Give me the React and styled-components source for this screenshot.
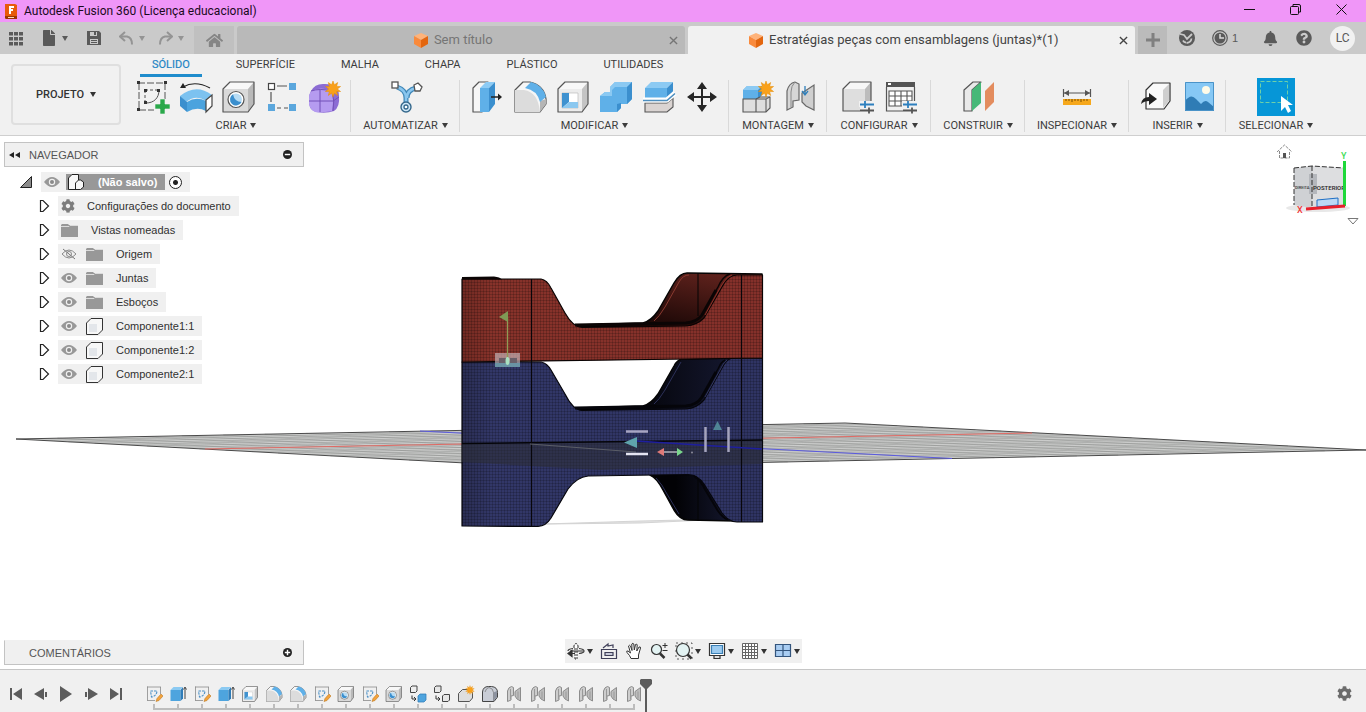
import React from 'react';
import styled, { createGlobalStyle } from 'styled-components';
import { FaBell, FaCog, FaFile, FaHome, FaQuestionCircle } from 'react-icons/fa';

const GlobalStyle = createGlobalStyle`
  *, *::before, *::after { box-sizing: border-box; }
  body {
    margin: 0;
    background: #ffffff;
    color: #333333;
    font-family: "Liberation Sans", Arial, sans-serif;
    font-size: 11px;
  }
  button {
    border: 0;
    padding: 0;
    background: none;
    color: inherit;
    font: inherit;
    cursor: pointer;
  }
  ul, ol { list-style: none; margin: 0; padding: 0; }
  svg { display: block; flex: none; }
`;

/* ---------- shell ---------- */

const Shell = styled.div`
  display: flex;
  flex-direction: column;
  min-height: 100vh;
`;

const TitleBar = styled.header`
  display: flex;
  align-items: center;
  height: 22px;
  padding: 0 2px 0 4px;
  gap: 6px;
  background: #f096f8;
  color: #1a0a1c;
`;

const Title = styled.h1`
  flex: 1;
  margin: 0;
  font-family: Roboto, "Open Sans", sans-serif;
  font-size: 12px;
  font-weight: 400;
  line-height: 20px;
  white-space: nowrap;
`;

const WindowControls = styled.div`
  display: flex;
  align-self: flex-start;
`;

const WindowButton = styled.button`
  display: flex;
  align-items: center;
  justify-content: center;
  width: 46px;
  height: 19px;
`;

const DocumentBar = styled.div`
  display: flex;
  align-items: flex-end;
  height: 32px;
  background: #cacaca;
  color: #5a5a5a;
`;

const QuickAccess = styled.div`
  display: flex;
  align-items: center;
  flex: none;
  width: 194px;
  height: 32px;
  padding-left: 8px;
`;

const QuickButton = styled.button`
  display: flex;
  align-items: center;
  gap: 5px;
  margin-right: ${(p) => p.$after}px;
  color: ${(p) => (p.disabled ? '#949494' : '#5a5a5a')};
`;

const HomeTab = styled.button`
  display: flex;
  align-items: center;
  justify-content: center;
  flex: none;
  width: 40px;
  height: 28px;
  margin-right: 3px;
  background: #c0c0c0;
  color: #858585;
`;

const DocumentTab = styled.div`
  display: flex;
  align-items: center;
  flex: 1;
  height: 28px;
  padding-right: 7px;
  margin-right: 3px;
  border-radius: 3px 3px 0 0;
  background: ${(p) => (p.$active ? '#f1f1f1' : '#b9b9b9')};
  color: ${(p) => (p.$active ? '#444444' : '#757575')};
`;

const DocumentName = styled.button`
  display: flex;
  align-items: center;
  justify-content: center;
  flex: 1;
  gap: 5px;
  font-family: Roboto, "Liberation Sans", sans-serif;
  font-size: 13px;
  line-height: 16px;
  white-space: nowrap;
`;

const SessionTools = styled.div`
  display: flex;
  align-items: center;
  flex: none;
  width: 228px;
  height: 32px;
`;

const NewTabButton = styled.button`
  display: flex;
  align-items: center;
  justify-content: center;
  align-self: flex-end;
  width: 29px;
  height: 28px;
  margin-right: 12px;
  background: #bbbbbb;
  color: #808080;
`;

const SessionButton = styled.button`
  display: flex;
  align-items: center;
  gap: 4px;
  margin-right: ${(p) => p.$after}px;
  font-size: 11px;
`;

const Avatar = styled.button`
  width: 25px;
  height: 25px;
  border-radius: 50%;
  background: #f1f1f1;
  font-family: Roboto, sans-serif;
  font-size: 12px;
`;

/* ---------- ribbon ---------- */

const Ribbon = styled.section`
  display: flex;
  height: 82px;
  border-bottom: 1px solid #cfcfcf;
  background: #f1f1f1;
`;

const WorkspaceButton = styled.button`
  display: flex;
  align-items: center;
  justify-content: center;
  flex: none;
  gap: 6px;
  width: 110px;
  height: 61px;
  margin: 10px 0 0 11px;
  border: 2px solid #dfdfdf;
  border-radius: 4px;
  font-family: Roboto, sans-serif;
  font-weight: 500;
`;

const RibbonBody = styled.div`
  flex: 1;
`;

const RibbonTabs = styled.nav`
  display: flex;
  gap: 22px;
  height: 23px;
  padding-left: 19px;
`;

const RibbonTab = styled.button`
  height: 23px;
  padding: 1px 12px 0;
  border-bottom: 3px solid ${(p) => (p.$active ? '#1f8ccc' : 'transparent')};
  color: ${(p) => (p.$active ? '#1f84c4' : '#3c3c3c')};
  font-family: Roboto, sans-serif;
  font-size: 11px;
  -webkit-text-stroke: ${(p) => (p.$active ? '0.2px' : '0')};
`;

const Groups = styled.div`
  display: flex;
`;

const Group = styled.div`
  display: flex;
  flex-direction: column;
  align-items: center;
  flex: none;
  width: ${(p) => p.$width}px;
  margin-top: 1px;
  background: ${(p) =>
    p.$last ? 'none' : 'linear-gradient(#d9d9d9, #d9d9d9) right 2px / 1px 52px no-repeat'};
`;

const Tools = styled.div`
  display: flex;
  gap: 7px;
  height: 38px;
  align-items: center;
  padding-left: ${(p) => p.$lead || 0}px;
`;

const GroupMenu = styled.button`
  display: flex;
  align-items: center;
  gap: 4px;
  height: 18px;
  font-family: Roboto, sans-serif;
  font-size: 11px;
  color: #3c3c3c;
`;

const CaretShape = styled.span`
  width: 0;
  height: 0;
  border: 3px solid transparent;
  border-top: 5px solid currentColor;
  border-bottom: 0;
`;

/* ---------- viewport ---------- */

const Viewport = styled.main`
  display: flex;
  flex-direction: column;
  justify-content: space-between;
  flex: 1;
  position: relative;
  min-height: 400px;
  overflow: hidden;
`;

const Scene = styled.svg`
  position: absolute;
  inset: 0;
  width: 100%;
  height: 100%;
`;

const UpperRow = styled.div`
  display: flex;
  justify-content: space-between;
  position: relative;
`;

const LowerRow = styled.div`
  display: grid;
  grid-template-columns: 1fr auto 1fr;
  position: relative;
  padding-bottom: 4px;
`;

const Browser = styled.section`
  margin: 6px 0 0 4px;
`;

const PanelBar = styled.div`
  display: flex;
  align-items: center;
  width: 300px;
  height: 25px;
  padding: 0 11px 0 4px;
  border: 1px solid #c3c3c3;
  border-top-color: ${(p) => (p.$flat ? '#f0f0f0' : '#c3c3c3')};
  margin: ${(p) => (p.$flat ? '1px 0 0 4px' : '0')};
  background: #f0f0f0;
  color: #555555;
`;

const PanelToggle = styled.button`
  display: flex;
  width: 20px;
  color: #222222;
`;

const PanelTitle = styled.h2`
  flex: 1;
  margin: 0;
  font-size: 11px;
  font-weight: 400;
`;

const Tree = styled.ul`
  padding-top: 3px;
`;

const TreeRow = styled.li`
  display: flex;
  align-items: center;
  height: 24px;
  padding-left: ${(p) => (p.$root ? 16 : 34)}px;
`;

const Expander = styled.button`
  display: flex;
  width: ${(p) => (p.$root ? 21 : 20)}px;
`;

const Chip = styled.div`
  display: flex;
  align-items: center;
  height: 20px;
  padding-right: 8px;
  background: #f0f0f0;
  color: #303030;
  white-space: nowrap;
`;

const Slot = styled.button`
  display: flex;
  width: ${(p) => (p.$narrow ? 21 : 25)}px;
  padding-left: 3px;
`;

const NodeName = styled.span`
  padding-left: 8px;
`;

const RootName = styled.span`
  display: flex;
  align-items: center;
  gap: 14px;
  height: 16px;
  padding: 0 8px 0 2px;
  margin-right: 4px;
  background: #989898;
  color: #ffffff;
  font-weight: 700;
`;

const ActiveRadio = styled.input`
  appearance: none;
  width: 13px;
  height: 13px;
  margin: 0;
  border: 1px solid #222222;
  border-radius: 50%;
  background: radial-gradient(circle, #222222 2px, #ffffff 3px);
`;

const CubeArea = styled.div`
  flex: none;
  width: 96px;
`;

const NavBar = styled.div`
  display: flex;
  align-items: center;
  gap: 7px;
  height: 24px;
  padding: 0 2px;
  background: #f0f0f0;
`;

const NavButton = styled.button`
  display: flex;
  align-items: center;
  gap: 2px;
  color: #333333;
`;

/* ---------- timeline ---------- */

const Timeline = styled.footer`
  display: flex;
  height: 43px;
  border-top: 1px solid #c6c6c6;
  background: #f0f0f0;
  color: #5c5c5c;
`;

const Playback = styled.div`
  display: flex;
  align-items: center;
  flex: none;
  gap: 7px;
  width: 142px;
  height: 47px;
  padding-left: 7px;
`;

const History = styled.div`
  flex: none;
`;

const Features = styled.ol`
  display: flex;
  height: 34px;
  padding-top: 14px;
`;

const Feature = styled.li`
  display: flex;
  justify-content: center;
  width: 24px;
`;

const Rail = styled.div`
  display: flex;
  justify-content: space-between;
  height: 6px;
  margin: 0 11px;
  border-bottom: 2px solid #bdbdbd;
`;

const Tick = styled.span`
  width: 2px;
  background: #bdbdbd;
`;

const Playhead = styled.div`
  flex: 1;
  padding-top: 9px;
  margin-left: -6px;
`;

const SettingsButton = styled.button`
  display: flex;
  align-items: center;
  height: 47px;
  padding-right: 14px;
  color: #6c6c6c;
`;

/* ---------- small drawings ---------- */

const BLUE = '#5fb0e8';
const DEEP = '#3b8fce';
const LINE = '#555555';

const Caret = () => <CaretShape aria-hidden="true" />;

const Svg = ({ size = 36, children }) => (
  <svg width={size} height={size} viewBox="0 0 36 36" fill="none" aria-hidden="true">
    {children}
  </svg>
);

const Burst = ({ x, y, r = 7 }) => {
  const pts = Array.from({ length: 20 }, (_, i) => {
    const a = (Math.PI * i) / 10;
    const d = i % 2 ? r * 0.55 : r;
    return `${(x + d * Math.sin(a)).toFixed(1)},${(y - d * Math.cos(a)).toFixed(1)}`;
  }).join(' ');
  return <polygon points={pts} fill="#f9a11b" stroke="#e58a00" strokeWidth=".5" />;
};

const Sliders = () => (
  <g>
    <path d="M19 25h16M20 31h14" stroke="#f1f1f1" strokeWidth="6" />
    <path d="M20 25.500h14M25 22v7" stroke="#2d7fbe" strokeWidth="1.800" />
    <path d="M20 31.500h14M29 28.500v6" stroke="#555" strokeWidth="1.800" />
  </g>
);

const GrayCube = () => (
  <g strokeLinejoin="round">
    <path d="M3 10l7-7h21l-6 7z" fill="#f7f7f7" />
    <path d="M25 10l6-7v22l-6 7z" fill="#bcbcbc" />
    <path d="M3 10h22v22H3z" fill="#dedede" />
    <path d="M3 10l7-7h21v22l-6 7H3z" stroke={LINE} strokeWidth="1.200" />
  </g>
);

const RibbonIcons = {
  sketch: (
    <Svg>
      <path d="M3 4h27M4 4v27M30 4v16M4 31h15" stroke="#555" strokeWidth="1" strokeDasharray="7 2" />
      <path d="M10 11h12M10 11v13" stroke="#555" strokeWidth="1" strokeDasharray="3 2" />
      <path d="M24 11c0 8-5 13-13 13" stroke="#555" strokeWidth="1" />
      <path d="M2 2h3v3H2zM29 2h3v3h-3zM2 29h3v3H2zM9 10h3v3H9zM22 10h3v3h-3zM9 22h3v3H9z" fill="#333" />
      <path d="M25 20h5v5h5v5h-5v5h-5v-5h-5v-5h5z" fill="#2aa84a" stroke="#f1f1f1" strokeWidth=".6" />
    </Svg>
  ),
  revolve: (
    <Svg>
      <path d="M5 8Q17 1 32 9" stroke="#222" strokeWidth="1.200" />
      <path d="M2 9l3-5 3 5z" fill="#222" />
      <path d="M2 17Q18 4 34 16l-6 6Q18 15 8 23z" fill="#7cc2f0" />
      <path d="M2 17l7 6v10l-7-6z" fill={DEEP} />
      <path d="M9 23Q18 17 28 22v10q-9-5-19 1z" fill="#4ba3de" />
      <path d="M28 21l6-5v11l-6 6z" fill="#fff" stroke="#444" strokeWidth="1.200" />
    </Svg>
  ),
  hole: (
    <Svg>
      <path d="M2 10l7-7h24l-6 7z" fill="#f8f8f8" />
      <path d="M27 10l6-7v22l-6 8z" fill="#b9b9b9" />
      <path d="M2 10h25v23H2z" fill="#d9d9d9" />
      <path d="M2 10l7-7h24v22l-6 8H2z" stroke={LINE} strokeWidth="1.200" strokeLinejoin="round" />
      <circle cx="15" cy="20.500" r="8" fill="#fff" stroke={LINE} strokeWidth="1.200" />
      <circle cx="15" cy="20.500" r="6" fill="#b7dcf4" />
      <path d="M12 15.300a6 6 0 1 0 8.500 7.700q-7 0-8.500-7.700z" fill={DEEP} />
    </Svg>
  ),
  pattern: (
    <Svg>
      <path d="M13 7h10M7 13v10M13 29h4M20 29h4" stroke="#555" strokeWidth="1.200" />
      <rect x="4.500" y="4.500" width="6" height="6" fill="#fff" stroke="#444" strokeWidth="1.200" />
      <path d="M25 4h7v7h-7zM4 25h7v7H4zM25 25h7v7h-7z" fill="#5ba7dd" />
    </Svg>
  ),
  form: (
    <Svg>
      <path d="M4 12Q8 4 18 5q14 0 14 12 1 11-5 15-8 3-18 1Q1 31 2 20q0-5 2-8z" fill="#8c6cd4" />
      <path d="M4 12Q14 7 25 12q2 10 0 20-11 2-17 1Q1 30 2 20q0-5 2-8z" fill="#b59bf0" />
      <path d="M2 22h24M13 11v22M4 12q9-3 21 0 3 10 1 20M26 22l6-4" stroke="#7350b8" strokeWidth="1" />
      <Burst x={26} y={10} r={8} />
    </Svg>
  ),
  automate: (
    <Svg>
      <path d="M9 8q9 3 9 11M28 9q-9 2-9 10M18 16v12" stroke="#4188b8" strokeWidth="5" />
      <path d="M9 8q9 3 9 11M28 9q-9 2-9 10M18 16v12" stroke="#8ac6ee" strokeWidth="2.500" />
      <rect x="4" y="3" width="6" height="6" fill="#fff" stroke="#555" strokeWidth="1.300" />
      <path d="M26 6l4-2 4 4-2 4h-5z" fill="#fff" stroke="#555" strokeWidth="1.300" />
      <circle cx="18" cy="28" r="5" fill="#cfe8f8" stroke="#34688c" strokeWidth="1.400" />
      <circle cx="18" cy="28" r="2" fill="#fff" stroke="#34688c" strokeWidth="1.300" />
    </Svg>
  ),
  pressPull: (
    <Svg>
      <path d="M4 9l6-6h9l-6 6v24H4z" fill="#f6f6f6" stroke={LINE} strokeWidth="1.200" strokeLinejoin="round" />
      <path d="M11 9l6-6h9l-6 6z" fill="#8ccbf5" />
      <path d="M11 9h9v24h-9z" fill={BLUE} />
      <path d="M20 9l6-6v22l-6 8z" fill={DEEP} />
      <path d="M22 18h8" stroke="#222" strokeWidth="1.500" />
      <path d="M29 14.500l4 3.500-4 3.500z" fill="#222" />
    </Svg>
  ),
  fillet: (
    <Svg>
      <path d="M3 11l8-8h7q14 3 16 17v5l-6 8H3z" fill="#f6f6f6" stroke={LINE} strokeWidth="1.200" strokeLinejoin="round" />
      <path d="M3 11h9q14 2 16 22H3z" fill="#dcdcdc" />
      <path d="M28 22l6-2v5l-6 8z" fill="#b5b5b5" />
      <path d="M13 9l6-6q12 3 15 15l-6 5Q25 11 13 9z" fill={BLUE} />
    </Svg>
  ),
  shell: (
    <Svg>
      <path d="M3 10l7-7h23l-6 7z" fill="#f8f8f8" />
      <path d="M27 10l6-7v22l-6 8z" fill="#c4c4c4" />
      <path d="M3 10h24v23H3z" fill="#ececec" />
      <path d="M3 10l7-7h23v22l-6 8H3z" stroke={LINE} strokeWidth="1.200" strokeLinejoin="round" />
      <path d="M7 14h16v15H7z" fill="#fff" stroke="#bbb" strokeWidth=".7" />
      <path d="M7 14h7v9l-7 6z" fill="#3f92d0" />
      <path d="M14 23h9v6H7z" fill="#8bc8f0" />
    </Svg>
  ),
  combine: (
    <Svg>
      <path d="M2 17l5-4h5V8l5-5h17v17l-5 5h-6v4l-4 4H2z" fill={BLUE} />
      <path d="M2 17l5-4h5V8l5-5h17l-5 5H17l-3 3v6z" fill="#8bc9f2" />
      <path d="M29 8l5-5v17l-5 5zM19 25l4-1v5l-4 4z" fill={DEEP} />
    </Svg>
  ),
  split: (
    <Svg>
      <path d="M4 9l6-6h22l-6 6z" fill="#8ccaf3" />
      <path d="M4 9h22v10H4z" fill={BLUE} />
      <path d="M26 9l6-6v10l-6 6z" fill={DEEP} />
      <path d="M4 24h22l6-5v9l-6 5H4z" fill="#dad4d2" stroke={LINE} strokeWidth="1.100" />
      <path d="M2 21h24l8-7" stroke="#fff" strokeWidth="5" />
      <path d="M2 21.500h24l8-7" stroke="#4d8fc0" strokeWidth="1.600" />
    </Svg>
  ),
  move: (
    <Svg>
      <path d="M18 6v24M6 18h24" stroke="#262626" strokeWidth="2" />
      <path d="M18 3l5 7H13zM18 33l5-7H13zM3 18l7-5v10zM33 18l-7-5v10z" fill="#262626" />
    </Svg>
  ),
  assemble: (
    <Svg>
      <path d="M4 11l4-4h15l-4 4v9H4z" fill={BLUE} />
      <path d="M4 11l4-4h15l-4 4z" fill="#8ccaf3" />
      <path d="M19 11l4-4v9l-4 4z" fill={DEEP} />
      <path d="M4 20h13v13H4zM17 20l4-2h10v11l-4 4H17z" fill="#dedede" stroke={LINE} strokeWidth="1.100" />
      <path d="M17 20h10v13M27 20l4-2" stroke={LINE} strokeWidth="1" />
      <Burst x={27} y={10} r={8} />
    </Svg>
  ),
  joint: (
    <Svg>
      <path d="M5 12q2-8 8-9l4 2v16l-6 1v6l-6 3z" fill="#d6d6d6" stroke="#686868" strokeWidth="1.200" />
      <path d="M13 3q-4 4-4 10v15" stroke="#8a8a8a" strokeWidth="1" />
      <path d="M20 14l12-8v25l-8-4-4-4z" fill="#cfcfcf" stroke="#686868" strokeWidth="1.200" />
      <path d="M23 7v8M20 12l3 4 3-4" stroke="#2f7fba" strokeWidth="1.300" />
    </Svg>
  ),
  configure: (
    <Svg>
      <GrayCube />
      <Sliders />
    </Svg>
  ),
  table: (
    <Svg>
      <path d="M3 3h29v5H3z" fill="#555" />
      <path d="M5 4h3v2H5z" fill="#fff" />
      <path d="M3.500 8v24H22M31.500 8v16" stroke="#555" strokeWidth="1.200" />
      <path d="M6 12h23v15H6zM6 17h23M6 22h23M12 12v15M18 12v15M24 12v15" fill="#fff" stroke="#555" strokeWidth="1.100" />
      <Sliders />
    </Svg>
  ),
  planes: (
    <Svg>
      <path d="M4 11l9-8h8l-9 8v21H4z" fill="#e9e9e9" stroke={LINE} strokeWidth="1.200" strokeLinejoin="round" />
      <path d="M12 11l9-8v21l-9 8z" fill="#46b878" />
      <path d="M25 12l9-9v20l-9 9z" fill="#e38c5e" />
    </Svg>
  ),
  measure: (
    <Svg>
      <path d="M4.500 10v8M31.500 10v8M5 14h26" stroke="#555" strokeWidth="1.200" />
      <path d="M5 14l5-3v6zM31 14l-5-3v6z" fill="#555" />
      <path d="M4 20h28v6H4z" fill="#f6a81c" />
      <path d="M7 20v2M10 20v2M13 20v3M16 20v2M19 20v2M22 20v3M25 20v2M28 20v2" stroke="#7a4d00" strokeWidth="1" />
    </Svg>
  ),
  insert: (
    <Svg>
      <path d="M8 11l7-7h17v18l-6 8H8z" fill="#fafafa" stroke="#333" strokeWidth="1.200" strokeLinejoin="round" />
      <path d="M25 11l6-6v17l-6 7z" fill="#cfcfcf" />
      <path d="M3 25q1-7 8-7v-4l8 6-8 6v-4q-5 0-8 3z" fill="#222" />
    </Svg>
  ),
  canvas: (
    <Svg>
      <path d="M4 3h29v29H4z" fill="#86c8f5" />
      <path d="M4 22q6-8 11-2l5 5q4-5 7-2l6 5v4H4z" fill="#2f7cb5" />
      <path d="M4.500 3.500h28v28h-28z" stroke="#4a93c8" />
      <circle cx="25" cy="11" r="4" fill="#fffbe8" />
    </Svg>
  ),
  select: (
    <svg width="38" height="38" viewBox="0 0 38 38" fill="none" aria-hidden="true">
      <path d="M0 0h38v38H0z" fill="#0696d7" />
      <path d="M3.500 3.500h27v21h-27z" stroke="#6fd0a8" strokeDasharray="4 2" />
      <path d="M24 18v15l4-4 3 6 3-2-3-6h5z" fill="#fff" />
    </svg>
  ),
};

const TimelineIcons = {
  sketch: (
    <Svg size={18}>
      <path d="M4 4h28M4 31h16M5 3v28M31 4v14" stroke="#8a8a8a" strokeWidth="1.600" />
      <path d="M11 12h13q-1 10-11 12l-2-12" stroke="#4a8fc6" strokeWidth="2.200" strokeDasharray="5 2" />
      <path d="M22 33l2-6 8-9 4 4-8 9z" fill="#f3a33c" stroke="#b36a10" />
    </Svg>
  ),
  extrude: (
    <Svg size={18}>
      <path d="M3 10l6-6h18l-5 6z" fill="#8bcaf2" />
      <path d="M3 10h20v22H3z" fill="#4ea4de" />
      <path d="M23 10l5-6v23l-5 5z" fill="#2f7cb8" />
      <path d="M32 6v22M29 9l3-5 3 5" stroke="#444" strokeWidth="2" />
    </Svg>
  ),
  shell: <Svg size={18}>{RibbonIcons.shell.props.children}</Svg>,
  fillet: <Svg size={18}>{RibbonIcons.fillet.props.children}</Svg>,
  hole: <Svg size={18}>{RibbonIcons.hole.props.children}</Svg>,
  bodyBlue: (
    <Svg size={18}>
      <path d="M3 5l3-3h10v10l-3 3H3z" fill="#eee" stroke="#444" strokeWidth="2" />
      <path d="M18 22l4-4h12v12l-4 4H18z" fill="#4ea4de" stroke="#2f7cb8" strokeWidth="1.500" />
      <path d="M6 21v7h7M10 24l4 4-4 4" stroke="#333" strokeWidth="2" />
    </Svg>
  ),
  body: (
    <Svg size={18}>
      <path d="M3 5l3-3h10v10l-3 3H3zM19 22l3-3h11v11l-3 3H19z" fill="#e6e6e6" stroke="#444" strokeWidth="2" />
      <path d="M6 21v7h7M10 24l4 4-4 4" stroke="#333" strokeWidth="2" />
    </Svg>
  ),
  component: (
    <Svg size={18}>
      <path d="M3 17l8-8h14l6 6v11l-6 7H3z" fill="#dedede" stroke="#555" strokeWidth="2" />
      <Burst x={26} y={10} r={9} />
    </Svg>
  ),
  capture: (
    <Svg size={18}>
      <path d="M3 14q1-11 12-11h6q12 1 12 12v9l-7 9H3z" fill="#c9cdd6" stroke="#444" strokeWidth="2" />
      <path d="M8 14q2-8 8-9 8 1 9 10v18" stroke="#777" strokeWidth="1.500" />
      <path d="M25 15l7-3v12l-7 8z" fill="#8d93a0" />
    </Svg>
  ),
  joint: (
    <Svg size={18}>
      <path d="M5 12q2-8 8-9l4 2v16l-5 1v8l-7 3z" fill="#cdcdcd" stroke="#8c8c8c" strokeWidth="2" />
      <path d="M20 13l11-8v27l-7-4-4-6z" fill="#bdbdbd" stroke="#8c8c8c" strokeWidth="2" />
      <path d="M11 8v20M26 13v14" stroke="#999" strokeWidth="2" />
    </Svg>
  ),
};

const AppLogo = () => (
  <svg width="14" height="17" viewBox="0 0 14 17" aria-hidden="true">
    <path d="M1 1h10l2 1v14H2l-1-1z" fill="#e8590c" />
    <path d="M1 13h12v3H2l-1-1z" fill="#9c3500" />
    <path d="M5 3h5v2H7v1h2v2H7v3H5z" fill="#fff" />
    <path d="M4 14h6v1H4z" fill="#ffd6b8" />
  </svg>
);

const DocCube = () => (
  <svg width="16" height="16" viewBox="0 0 16 16" aria-hidden="true">
    <path d="M8 1l7 3-7 4-7-4z" fill="#ffb37a" />
    <path d="M1 4l7 4v8l-7-4z" fill="#f98a3c" />
    <path d="M15 4L8 8v8l7-4z" fill="#e3660f" />
  </svg>
);

const CloseMark = ({ size = 9 }) => (
  <svg width={size} height={size} viewBox="0 0 10 10" aria-hidden="true">
    <path d="M1 1l8 8M9 1L1 9" stroke="currentColor" strokeWidth="1.500" />
  </svg>
);

const ArrowBack = ({ flip }) => (
  <svg width="15" height="14" viewBox="0 0 15 14" fill="none" aria-hidden="true">
    <g transform={flip ? 'translate(15 0) scale(-1 1)' : undefined}>
      <path d="M6 1L1 5.500 6 10" stroke="currentColor" strokeWidth="2" />
      <path d="M2 5.500h6q5 1 5 8" stroke="currentColor" strokeWidth="2" />
    </g>
  </svg>
);

const Eye = ({ hidden }) =>
  hidden ? (
    <svg width="16" height="12" viewBox="0 0 16 12" fill="none" aria-hidden="true">
      <path d="M1 6q7-8 14 0-7 8-14 0z" stroke="#8a8a8a" />
      <circle cx="8" cy="6" r="2.500" stroke="#8a8a8a" />
      <path d="M2 1l12 10" stroke="#777" />
    </svg>
  ) : (
    <svg width="16" height="12" viewBox="0 0 16 12" aria-hidden="true">
      <path d="M0 6q8-10 16 0-8 10-16 0z" fill="#989898" />
      <circle cx="8" cy="6" r="3.200" fill="#f0f0f0" />
      <circle cx="8" cy="6" r="2" fill="#8a8a8a" />
    </svg>
  );

const Folder = () => (
  <svg width="17" height="13" viewBox="0 0 17 13" aria-hidden="true">
    <path d="M0 1l1-1h6l1 1h9v12H0z" fill="#989898" />
    <path d="M0 2.500h8l1-1h8" stroke="#dcdcdc" fill="none" />
  </svg>
);

const BodyBox = () => (
  <svg width="17" height="17" viewBox="0 0 17 17" aria-hidden="true">
    <path d="M.5 5L5 .5h11.500V12L12 16.500H.5z" fill="#f7f7f7" stroke="#333" />
    <path d="M3 6h8v8H3z" fill="#e3e6ea" />
  </svg>
);

const RootBox = () => (
  <svg width="16" height="16" viewBox="0 0 16 16" aria-hidden="true">
    <path d="M.5 4L4 .5h6.500V6h2l3 2v5l-3 2.500H.5z" fill="#f7f7f7" stroke="#222" />
    <path d="M7.500 15.500V9L10.500 6" fill="none" stroke="#222" />
  </svg>
);

const Ball = ({ plus }) => (
  <svg width="9" height="9" viewBox="0 0 10 10" aria-hidden="true">
    <circle cx="5" cy="5" r="5" fill="#222" />
    <path d={plus ? 'M2 5h6M5 2v6' : 'M2 5h6'} stroke="#fff" strokeWidth="1.600" />
  </svg>
);

const SmallTool = ({ children }) => (
  <svg width="18" height="18" viewBox="0 0 18 18" fill="none" stroke="#333" strokeWidth="1.200" aria-hidden="true">
    {children}
  </svg>
);

const NAV_TOOLS = [
  {
    name: 'Órbita',
    menu: true,
    icon: (
      <SmallTool>
        <path d="M8 17V5H6l3-4 3 4h-2v12z" fill="#fff" strokeWidth="1" strokeDasharray="2 1" />
        <path d="M12 6.500q5 .5 5 2.500t-5 2.500" />
        <path d="M6 6.500Q1 7 1 9" />
        <path d="M1 11.500l4-3v6z" fill="#333" />
        <path d="M4 11.500h4M3 9h13" />
      </SmallTool>
    ),
  },
  {
    name: 'Olhar para',
    icon: (
      <SmallTool>
        <path d="M1.500 7.500h15v9h-15z" stroke="#3f3f58" />
        <path d="M5 10.500h8v3H5z" fill="#c6c9d8" stroke="#3f3f58" />
        <path d="M3 6l5-4v2l5-1v3" stroke="#3f3f58" />
      </SmallTool>
    ),
  },
  {
    name: 'Mover vista',
    icon: (
      <SmallTool>
        <path
          d="M6 16.500q-1-3-4-6-1-2 1-1.500L5.500 11 3.500 4q1-1.500 2 0L7 8.500 6.800 2q1.200-1.500 2 0L9.300 8l1.200-5.500q1.500-1 1.700.5L11.800 9l2.200-4q1.700-.5 1.500 1L13.500 13v3.500z"
          fill="#fff"
          strokeWidth="1"
        />
      </SmallTool>
    ),
  },
  {
    name: 'Zoom',
    icon: (
      <SmallTool>
        <circle cx="6.500" cy="7.500" r="5" fill="#e3f3f3" />
        <path d="M10 11.500l4.500 4.500" strokeWidth="2.500" />
        <path d="M12.500 3.500h5M15 1v5M12.500 8.500h5" strokeWidth="1" />
      </SmallTool>
    ),
  },
  {
    name: 'Ajustar',
    menu: true,
    icon: (
      <SmallTool>
        <path d="M1 1h16v16H1z" strokeDasharray="2 3" strokeWidth=".8" />
        <circle cx="8" cy="8" r="6.500" fill="#e3f3f3" />
        <path d="M12.500 12.500l4 4" strokeWidth="2.500" />
      </SmallTool>
    ),
  },
  {
    name: 'Configurações de exibição',
    menu: true,
    icon: (
      <SmallTool>
        <path d="M6 13.500h6v3H6z" fill="#ddd" />
        <path d="M1.500 1.500h15v12h-15z" fill="#fff" />
        <path d="M3.500 3.500h11v8h-11z" fill="#9ccbf0" stroke="#3a7fb4" />
      </SmallTool>
    ),
  },
  {
    name: 'Grade e encaixe',
    menu: true,
    icon: (
      <SmallTool>
        <path
          d="M1.500 1.500h15v15h-15zM4.500 1.500v15M7.500 1.500v15M10.500 1.500v15M13.500 1.500v15M1.500 4.500h15M1.500 7.500h15M1.500 10.500h15M1.500 13.500h15"
          stroke="#666"
          strokeWidth="1"
          fill="#fff"
        />
      </SmallTool>
    ),
  },
  {
    name: 'Viewports',
    menu: true,
    icon: (
      <SmallTool>
        <path d="M1.500 2.500h15v12h-15z" fill="#a9cdf2" stroke="#33557d" />
        <path d="M9 3v11M2 8.500h14" stroke="#33557d" />
      </SmallTool>
    ),
  },
];

const RIBBON_TABS = ['SÓLIDO', 'SUPERFÍCIE', 'MALHA', 'CHAPA', 'PLÁSTICO', 'UTILIDADES'];

const GROUPS = [
  { label: 'CRIAR', width: 230, lead: 6, tools: ['sketch', 'revolve', 'hole', 'pattern', 'form'] },
  { label: 'AUTOMATIZAR', width: 109, tools: ['automate'] },
  { label: 'MODIFICAR', width: 269, tools: ['pressPull', 'fillet', 'shell', 'combine', 'split', 'move'] },
  { label: 'MONTAGEM', width: 98, tools: ['assemble', 'joint'] },
  { label: 'CONFIGURAR', width: 104, tools: ['configure', 'table'] },
  { label: 'CONSTRUIR', width: 94, tools: ['planes'] },
  { label: 'INSPECIONAR', width: 104, tools: ['measure'] },
  { label: 'INSERIR', width: 97, tools: ['insert', 'canvas'] },
  { label: 'SELECIONAR', width: 100, tools: ['select'] },
];

const NODES = [
  { name: 'Configurações do documento', kind: 'settings' },
  { name: 'Vistas nomeadas', kind: 'folder' },
  { name: 'Origem', kind: 'folder', eye: 'off' },
  { name: 'Juntas', kind: 'folder', eye: 'on' },
  { name: 'Esboços', kind: 'folder', eye: 'on' },
  { name: 'Componente1:1', kind: 'body', eye: 'on' },
  { name: 'Componente1:2', kind: 'body', eye: 'on' },
  { name: 'Componente2:1', kind: 'body', eye: 'on' },
];

const FEATURES = [
  'sketch', 'extrude', 'sketch', 'extrude', 'shell', 'fillet', 'fillet',
  'sketch', 'hole', 'sketch', 'hole', 'bodyBlue', 'body', 'component', 'capture',
  'joint', 'joint', 'joint', 'joint', 'joint', 'joint',
];

const PLAYBACK = [
  { name: 'Início', d: 'M3 3h2v12H3zM15 3v12L6 9z' },
  { name: 'Voltar', d: 'M12 3v12L2 9zM13 7h2v5h-2z' },
  { name: 'Reproduzir', d: 'M3 1l12 8L3 17z' },
  { name: 'Avançar', d: 'M6 3l10 6-10 6zM3 7h2v5H3z' },
  { name: 'Fim', d: 'M13 3h2v12h-2zM3 3l9 6-9 6z' },
];

/* ---------- scene ---------- */

const mix = (a, b, t) => [a[0] + (b[0] - a[0]) * t, a[1] + (b[1] - a[1]) * t];
const W = [16, 439];
const N = [845, 423];
const E = [1366, 450];
const S = [540, 467];
const STEPS = Array.from({ length: 19 }, (_, i) => (i + 1) / 20);

const FRONT_RED =
  'M462 279H541Q547 280 551 288L565 313Q573 327 582 327.500L686 326Q697 325 704 318L722 287Q728 275 737 275H762.500V358L462 362z';
const FRONT_BLUE =
  'M462 362H541Q547 363 551 370L565 394Q573 410 582 410.500L686 409Q697 408 704 400L722 368Q726 360 731 358.500L762.500 358V522H737Q729 522 722 513L704 484Q698 475 688 474.500L588 476Q577 477 568 489L551 518Q546 526 538 526.500L462 526z';

const ModelScene = () => (
  <Scene viewBox="0 136 1366 533" preserveAspectRatio="xMidYMid slice" aria-label="Modelo 3D">
    <defs>
      <pattern id="mesh" width="3" height="3" patternUnits="userSpaceOnUse">
        <path d="M0 .5h3M.5 0v3" stroke="#000" strokeOpacity=".17" />
      </pattern>
      <linearGradient id="red" x1="0" x2="1">
        <stop offset="0" stopColor="#6f2922" />
        <stop offset=".1" stopColor="#87322a" />
        <stop offset="1" stopColor="#84302a" />
      </linearGradient>
      <linearGradient id="blue" x1="0" x2="1">
        <stop offset="0" stopColor="#2a2d52" />
        <stop offset=".1" stopColor="#323768" />
        <stop offset="1" stopColor="#2f3463" />
      </linearGradient>
      <linearGradient id="redBack" x1=".3" x2="1" y1="1" y2="0">
        <stop offset="0" stopColor="#140504" />
        <stop offset="1" stopColor="#6a2620" />
      </linearGradient>
      <linearGradient id="blueBack" x1=".3" x2="1">
        <stop offset="0" stopColor="#020205" />
        <stop offset="1" stopColor="#151830" />
      </linearGradient>
    </defs>

    <polygon points={[W, N, E, S].join(' ')} fill="#cfd0cf" />
    <g stroke="#8d8f8d" strokeWidth=".5">
      {STEPS.map((t) => {
        const a = mix(W, S, t);
        const b = mix(N, E, t);
        const c = mix(W, N, t);
        const d = mix(S, E, t);
        return (
          <g key={t}>
            <line x1={a[0]} y1={a[1]} x2={b[0]} y2={b[1]} />
            <line x1={c[0]} y1={c[1]} x2={d[0]} y2={d[1]} />
          </g>
        );
      })}
    </g>
    <polygon points={[W, N, E, S].join(' ')} fill="none" stroke="#4a4a4a" />
    <path d="M205 449L1032 433" stroke="#e06a64" />
    <path d="M420 431L952 458.500" stroke="#5a5ae0" />

    <path d="M545 524L640 521L728 519L640 523z" fill="#e2e2e2" stroke="#d4d4d4" />

    <g stroke="#050505" strokeWidth="1.500" strokeLinejoin="round">
      <path d="M578 325L643 323Q651 321 658 311L674 283Q680 273 687 273L762 274V300L700 327H578z" fill="url(#redBack)" />
      <path d="M578 408L643 406Q651 404 658 394L674 366Q677 360 682 359L735 358L700 410H578z" fill="url(#blueBack)" />
      <path d="M650 475Q657 478 663 490L674 510Q680 520 688 520L735 521L704 474z" fill="url(#blueBack)" />
    </g>
    <path d="M698 273V316M698 480V521" stroke="#050505" />
    <path d="M654 321Q659 317 665 307L679 282Q683 275 689 275" fill="none" stroke="#8a3a30" />
    <path d="M654 404Q659 400 665 390L681 362M656 478Q662 484 667 494L679 514" fill="none" stroke="#2c3058" />

    <g strokeLinejoin="round">
      <path d={FRONT_BLUE} fill="url(#blue)" />
      <path d={FRONT_BLUE} fill="url(#mesh)" stroke="#06060c" strokeWidth="1.200" />
      <path d={FRONT_RED} fill="url(#red)" />
      <path d={FRONT_RED} fill="url(#mesh)" stroke="#0a0404" strokeWidth="1.200" />
    </g>
    <path d="M462 277L494 276.500Q500 277 502 279.500H462z" fill="#0b0505" />
    <path d="M575 325L686 323Q697 322 702 315L716 290" fill="none" stroke="#0b0505" strokeWidth="3" />
    <path d="M702 315L718 287Q723 276 730 274" fill="none" stroke="#0b0505" strokeWidth="1.500" />
    <path d="M705 315L720 288Q726 277 732 275" fill="none" stroke="#8c3027" />
    <path d="M575 408L686 406Q697 405 702 397L716 372" fill="none" stroke="#05050a" strokeWidth="3" />
    <path d="M702 397L718 369Q721 362 725 360" fill="none" stroke="#05050a" strokeWidth="1.500" />
    <path d="M705 397L720 370Q723 363 727 360" fill="none" stroke="#30355f" />
    <path d="M694 476Q700 479 706 491L718 511Q723 518 728 520" fill="none" stroke="#05050a" strokeWidth="2" />

    <path d="M462 444L762 441V464L600 470L462 462z" fill="#2b2d35" fillOpacity=".55" />
    <path d="M462 443.500L762 440" stroke="#050508" strokeWidth="1.500" />
    <path d="M531.500 279V526M741.500 275V522" stroke="#08060a" strokeWidth="1.200" />
    <path d="M530 444L636 452" stroke="#5b5e68" />
    <path d="M636 441L762 449" stroke="#1e1e9e" strokeWidth="1.300" />

    <rect x="495" y="353" width="25" height="14" fill="#c9bcc0" fillOpacity=".65" />
    <path d="M495 363h25v4h-25z" fill="#5f95a5" fillOpacity=".8" />
    <path d="M499 358h7v5h-7zM510 358h7v5h-7z" fill="#6a5f68" />
    <path d="M507.500 317V362" stroke="#8f9a55" strokeWidth="1.300" />
    <path d="M508 311V322L499 317z" fill="#7f9a55" />
    <ellipse cx="507.500" cy="361" rx="2" ry="4" fill="#a9e0c0" />
    <path d="M626 431.500H648" stroke="#a8a6c4" strokeWidth="2.500" />
    <path d="M626 454H648" stroke="#e4e4f0" strokeWidth="2.500" />
    <path d="M624 442.500L637 437V448z" fill="#5fa3ac" />
    <path d="M705.500 427V452M728.500 427V452" stroke="#a4a3bd" strokeWidth="2.500" />
    <path d="M717.500 421L722 430H713z" fill="#4f8494" />
    <path d="M664 452H677" stroke="#f0f0f0" />
    <path d="M657 452L664 448V456z" fill="#e07a78" />
    <path d="M683 452L677 448V456z" fill="#7ad68c" />
    <circle cx="692" cy="452.500" r="1" fill="#8c8c9a" />
  </Scene>
);

const CubeLabel = styled.text`
  font-family: Roboto, "Liberation Sans", sans-serif;
  font-size: ${(p) => p.$size}px;
  font-weight: 500;
  fill: ${(p) => p.$tone};
`;

const ViewCube = () => (
  <svg width="96" height="96" viewBox="1270 136 96 96" fill="none" aria-label="ViewCube">
    <path d="M1277 152L1284.500 145L1292 152M1279.500 151V158H1289.500V151" stroke="#8a8a8a" strokeDasharray="3 1" />
    <path d="M1283 153h3v5h-3z" fill="#555" />
    <ellipse cx="1318" cy="208" rx="32" ry="4" fill="#e8e8e8" />
    <path d="M1294 168L1312 166V208L1294 205z" fill="#cfd1d4" />
    <path d="M1312 166L1344 168V205L1312 209z" fill="#dddee0" />
    <path d="M1309 174h8v20h-8z" fill="#b4b7bc" />
    <path d="M1294 168L1312 166L1344 168M1294 168V205M1312 166V208" stroke="#333" strokeDasharray="5 2" />
    <path d="M1317 200L1338 198V205L1317 207z" fill="#bcd9f5" stroke="#1f6fc4" />
    <CubeLabel x="1313" y="190" $size={6} $tone="#222222">POSTERIOR</CubeLabel>
    <CubeLabel x="1295" y="189" $size={4} $tone="#333333">DIREITA</CubeLabel>
    <path d="M1344.500 161V206" stroke="#1fd83a" strokeWidth="3" />
    <path d="M1306 209L1345 206" stroke="#e8202c" strokeWidth="3" />
    <CubeLabel x="1341" y="159" $size={9} $tone="#3fdc55">Y</CubeLabel>
    <CubeLabel x="1297" y="213" $size={9} $tone="#f03a3a">X</CubeLabel>
    <path d="M1348 218.500H1358L1353 224z" stroke="#777" fill="#fff" />
  </svg>
);

/* ---------- page ---------- */

const nodeIcon = {
  settings: <FaCog size={14} color="#7d7d7d" />,
  folder: <Folder />,
  body: <BodyBox />,
};

export default function App() {
  return (
    <>
      <GlobalStyle />
      <Shell>
        <TitleBar>
          <AppLogo />
          <Title>Autodesk Fusion 360 (Licença educacional)</Title>
          <WindowControls>
            <WindowButton aria-label="Minimizar">
              <svg width="11" height="11" viewBox="0 0 11 11"><path d="M0 5.500h11" stroke="#111" /></svg>
            </WindowButton>
            <WindowButton aria-label="Restaurar">
              <svg width="11" height="11" viewBox="0 0 11 11" fill="none" stroke="#111">
                <rect x=".5" y="2.500" width="8" height="8" rx="1" />
                <path d="M3 2V.5h6q1.500 0 1.500 1.500v6H9" />
              </svg>
            </WindowButton>
            <WindowButton aria-label="Fechar">
              <svg width="11" height="11" viewBox="0 0 11 11"><path d="M.5.5l10 10M10.500.5l-10 10" stroke="#111" /></svg>
            </WindowButton>
          </WindowControls>
        </TitleBar>

        <DocumentBar>
          <QuickAccess>
            <QuickButton $after={18} aria-label="Painel de dados">
              <svg width="15" height="15" viewBox="0 0 15 15" fill="currentColor">
                <path d="M1 1h4v3.500H1zM6 1h4v3.500H6zM11 1h4v3.500h-4zM1 6h4v3.500H1zM6 6h4v3.500H6zM11 6h4v3.500h-4zM1 11h4v3.500H1zM6 11h4v3.500H6zM11 11h4v3.500h-4z" />
              </svg>
            </QuickButton>
            <QuickButton $after={18} aria-label="Arquivo">
              <FaFile size={16} />
              <Caret />
            </QuickButton>
            <QuickButton $after={17} aria-label="Salvar">
              <svg width="16" height="16" viewBox="0 0 16 16">
                <path d="M1 1h12l2 2v12H1z" fill="currentColor" />
                <path d="M4 2h7v4H4zM4 9h8v5H4z" fill="#cacaca" />
                <path d="M8 2h2v3H8zM5 10h6v1H5zM5 12h6v1H5z" fill="currentColor" />
              </svg>
            </QuickButton>
            <QuickButton $after={13} disabled aria-label="Desfazer">
              <ArrowBack />
              <Caret />
            </QuickButton>
            <QuickButton $after={0} disabled aria-label="Refazer">
              <ArrowBack flip />
              <Caret />
            </QuickButton>
          </QuickAccess>
          <HomeTab aria-label="Início">
            <FaHome size={17} />
          </HomeTab>
          <DocumentTab>
            <DocumentName>
              <DocCube />
              Sem título
            </DocumentName>
            <button aria-label="Fechar Sem título"><CloseMark /></button>
          </DocumentTab>
          <DocumentTab $active>
            <DocumentName>
              <DocCube />
              Estratégias peças com ensamblagens (juntas)*(1)
            </DocumentName>
            <button aria-label="Fechar documento"><CloseMark /></button>
          </DocumentTab>
          <SessionTools>
            <NewTabButton aria-label="Novo documento">
              <svg width="14" height="14" viewBox="0 0 14 14"><path d="M7 0v14M0 7h14" stroke="currentColor" strokeWidth="3" /></svg>
            </NewTabButton>
            <SessionButton $after={17} aria-label="Extensões">
              <svg width="16" height="16" viewBox="0 0 16 16">
                <circle cx="8" cy="8" r="8" fill="currentColor" />
                <path d="M1 4l4 1 3 4 5-5M12.500 8.500q-.5 4-5 4.500M4 10.500q1 2 3 2" stroke="#cacaca" strokeWidth="1.800" fill="none" />
              </svg>
            </SessionButton>
            <SessionButton $after={25} aria-label="Status do trabalho">
              <svg width="16" height="16" viewBox="0 0 16 16" fill="none">
                <circle cx="8" cy="8" r="7.300" stroke="currentColor" strokeWidth="1.200" />
                <circle cx="8" cy="8" r="5.500" fill="currentColor" />
                <path d="M8 4v4h4" stroke="#dadada" strokeWidth="1.500" />
              </svg>
              1
            </SessionButton>
            <SessionButton $after={18} aria-label="Notificações"><FaBell size={15} /></SessionButton>
            <SessionButton $after={18} aria-label="Ajuda"><FaQuestionCircle size={16} /></SessionButton>
            <Avatar>LC</Avatar>
          </SessionTools>
        </DocumentBar>

        <Ribbon>
          <WorkspaceButton>
            PROJETO
            <Caret />
          </WorkspaceButton>
          <RibbonBody>
            <RibbonTabs>
              {RIBBON_TABS.map((tab, i) => (
                <RibbonTab key={tab} $active={i === 0}>{tab}</RibbonTab>
              ))}
            </RibbonTabs>
            <Groups>
              {GROUPS.map((g, i) => (
                <Group key={g.label} $width={g.width} $last={i === GROUPS.length - 1}>
                  <Tools $lead={g.lead}>
                    {g.tools.map((t) => (
                      <button key={t} aria-label={t}>{RibbonIcons[t]}</button>
                    ))}
                  </Tools>
                  <GroupMenu>
                    {g.label}
                    <Caret />
                  </GroupMenu>
                </Group>
              ))}
            </Groups>
          </RibbonBody>
        </Ribbon>

        <Viewport>
          <ModelScene />
          <UpperRow>
            <Browser>
              <PanelBar>
                <PanelToggle aria-label="Recolher navegador">
                  <svg width="11" height="8" viewBox="0 0 11 8"><path d="M5 1v6L0 4zM11 1v6L6 4z" fill="#222" /></svg>
                </PanelToggle>
                <PanelTitle>NAVEGADOR</PanelTitle>
                <button aria-label="Opções do navegador"><Ball /></button>
              </PanelBar>
              <Tree>
                <TreeRow $root>
                  <Expander $root aria-label="Recolher">
                    <svg width="12" height="12" viewBox="0 0 12 12"><path d="M11.500.5v11H.5z" fill="#8c8c8c" stroke="#222" /></svg>
                  </Expander>
                  <Chip>
                    <Slot aria-label="Visibilidade"><Eye /></Slot>
                    <RootName>
                      <RootBox />
                      (Não salvo)
                    </RootName>
                    <ActiveRadio type="radio" name="active" defaultChecked aria-label="Ativar (Não salvo)" />
                  </Chip>
                </TreeRow>
                {NODES.map((n) => (
                  <TreeRow key={n.name}>
                    <Expander aria-label={`Expandir ${n.name}`}>
                      <svg width="12" height="14" viewBox="0 0 12 14"><path d="M2.500 1.500V12.500H5L10.500 7 5 1.500z" fill="#fff" stroke="#222" strokeWidth="1.200" /></svg>
                    </Expander>
                    <Chip>
                      {n.eye && (
                        <Slot aria-label={`Visibilidade de ${n.name}`}><Eye hidden={n.eye === 'off'} /></Slot>
                      )}
                      <Slot $narrow={n.kind === 'settings'} aria-label={n.name}>{nodeIcon[n.kind]}</Slot>
                      <NodeName>{n.name}</NodeName>
                    </Chip>
                  </TreeRow>
                ))}
              </Tree>
            </Browser>
            <CubeArea><ViewCube /></CubeArea>
          </UpperRow>
          <LowerRow>
            <PanelBar $flat>
              <PanelToggle as="span" />
              <PanelTitle>COMENTÁRIOS</PanelTitle>
              <button aria-label="Adicionar comentário"><Ball plus /></button>
            </PanelBar>
            <NavBar>
              {NAV_TOOLS.map((t) => (
                <NavButton key={t.name} aria-label={t.name}>
                  {t.icon}
                  {t.menu && <Caret />}
                </NavButton>
              ))}
            </NavBar>
          </LowerRow>
        </Viewport>

        <Timeline>
          <Playback>
            {PLAYBACK.map((b) => (
              <button key={b.name} aria-label={b.name}>
                <svg width="18" height="18" viewBox="0 0 18 18"><path d={b.d} fill="currentColor" /></svg>
              </button>
            ))}
          </Playback>
          <History>
            <Features>
              {FEATURES.map((f, i) => (
                <Feature key={i}>
                  <button aria-label={`${f} ${i + 1}`}>{TimelineIcons[f]}</button>
                </Feature>
              ))}
            </Features>
            <Rail>
              {FEATURES.map((_, i) => <Tick key={i} />)}
            </Rail>
          </History>
          <Playhead>
            <svg width="12" height="33" viewBox="0 0 12 33"><path d="M0 1l1-1h10l1 1v4L7 10v23H5V10L0 5z" fill="#5c5c5c" /></svg>
          </Playhead>
          <SettingsButton aria-label="Configurações da linha do tempo"><FaCog size={15} /></SettingsButton>
        </Timeline>
      </Shell>
    </>
  );
}
